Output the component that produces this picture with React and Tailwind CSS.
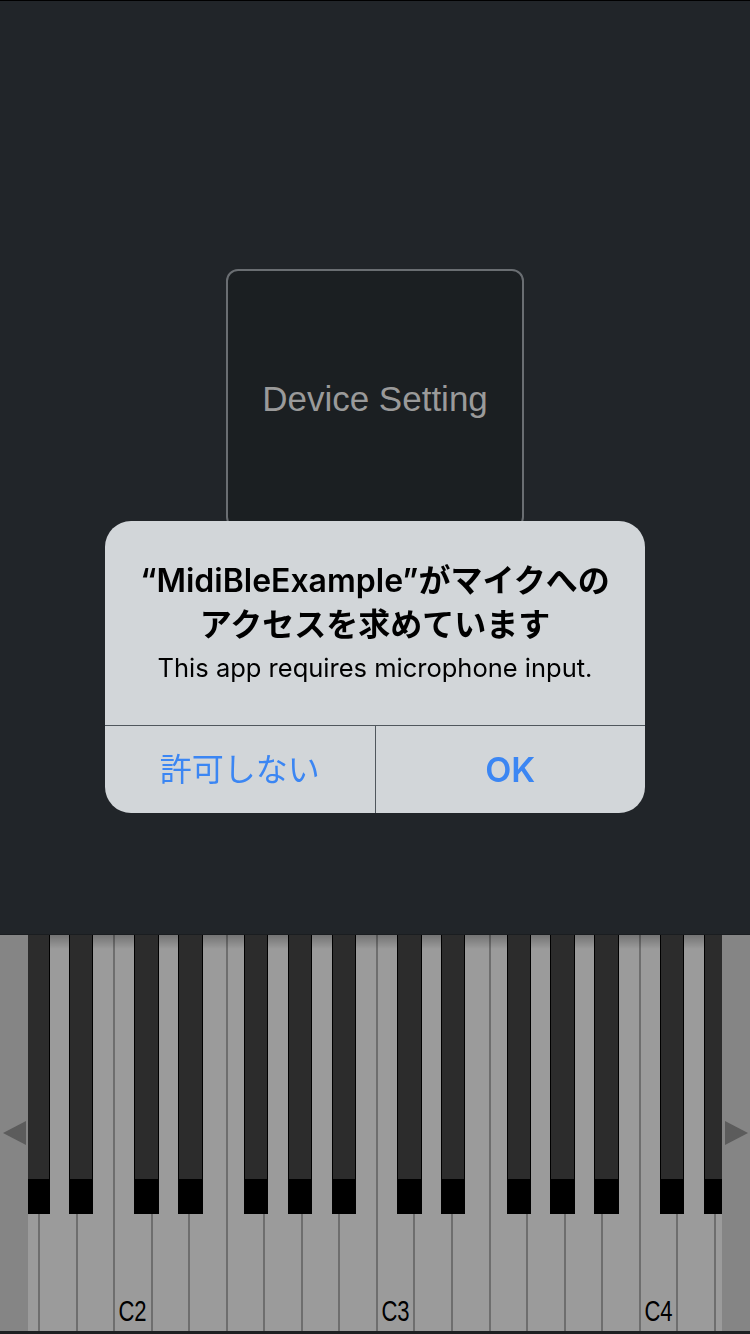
import React from 'react';

const SEMI = 21.9;
// C of each octave, measured from the keyboard's left edge (x = 28)
const OCTAVES = [-176.7, 86, 348.7, 611.4];
const BLACK_STEPS = [1, 3, 6, 8, 10];

const blackKeys = OCTAVES.flatMap((start) =>
    BLACK_STEPS.map((s) => start + s * SEMI - 1.5)
).filter((x) => x > -24 && x < 694);

const labels = [
    { name: 'C2', left: 86 },
    { name: 'C3', left: 348.7 },
    { name: 'C4', left: 611.4 },
];

const Keyboard = () => (
    <div className="flex h-[400px] bg-[#858585] border-t border-[#1a1d20] border-b-[3px] border-b-[#1d1f21]">
        {/* left scroll arrow */}
        <div className="w-[28px] shrink-0 flex items-center justify-center">
            <div className="w-0 h-0 border-y-[12px] border-y-transparent border-r-[23px] border-r-[#5c5c5c]" />
        </div>

        <div className="relative w-[694px] shrink-0 overflow-hidden bg-[#9b9b9b]">
            {/* white keys */}
            <div className="flex h-full ml-[-27.2px]">
                {Array.from({ length: 21 }).map((_, i) => (
                    <div key={i} className="w-[37.53px] shrink-0 h-full border-l-2 border-[#6e6e6e] bg-[#9b9b9b]" />
                ))}
            </div>

            {/* top shade */}
            <div className="absolute top-0 left-0 right-0 h-[14px] bg-gradient-to-b from-black/25 to-transparent" />

            {/* black keys */}
            {blackKeys.map((x, i) => (
                <div
                    key={i}
                    className="absolute top-0 w-[24.5px] h-[279px] flex flex-col border-x border-black"
                    style={{ left: x }}
                >
                    <div className="flex-1 bg-[#2c2c2c]" />
                    <div className="h-[35px] bg-black" />
                </div>
            ))}

            {/* note labels */}
            {labels.map((l) => (
                <div
                    key={l.name}
                    className="absolute top-[362px] w-[37.53px] flex justify-center"
                    style={{ left: l.left }}
                >
                    <span className="text-[29px] leading-[29px] text-black scale-x-[0.76] inline-block" style={{ fontFamily: '"Liberation Sans", Arial, sans-serif' }}>
                        {l.name}
                    </span>
                </div>
            ))}
        </div>

        {/* right scroll arrow */}
        <div className="w-[28px] shrink-0 flex items-center justify-center">
            <div className="w-0 h-0 border-y-[12px] border-y-transparent border-l-[23px] border-l-[#5c5c5c]" />
        </div>
    </div>
);

const PermissionAlert = () => (
    <div className="fixed inset-0 flex items-center justify-center">
        <div className="w-[540px] h-[292px] rounded-[26px] bg-[#d2d6d9] overflow-hidden flex flex-col">
            <div className="h-[204px] pt-[38px] flex flex-col items-center text-black">
                <div
                    className="text-[32px] leading-[44px] font-semibold text-center"
                    style={{ fontFamily: 'Inter, "Noto Sans CJK JP", sans-serif' }}
                >
                    <div>“MidiBleExample”がマイクへの</div>
                    <div>アクセスを求めています</div>
                </div>
                <div
                    className="mt-[5px] text-[25.5px] leading-[32px]"
                    style={{ fontFamily: 'Inter, "Noto Sans CJK JP", sans-serif' }}
                >
                    This app requires microphone input.
                </div>
            </div>
            <div className="flex flex-1 border-t border-[#50575d]">
                <button
                    className="flex-1 flex items-center justify-center text-[32px] text-[#3b86f3] border-r border-[#50575d]"
                    style={{ fontFamily: 'Inter, "Noto Sans CJK JP", sans-serif' }}
                >
                    許可しない
                </button>
                <button
                    className="flex-1 flex items-center justify-center text-[34px] font-semibold text-[#3b86f3]"
                    style={{ fontFamily: 'Inter, "Noto Sans CJK JP", sans-serif' }}
                >
                    OK
                </button>
            </div>
        </div>
    </div>
);

const App = () => {
    return (
        <div className="w-[750px] h-[1334px] flex flex-col bg-[#212529] border-t border-black">
            <div className="flex-1 flex justify-center pt-[268px]">
                <button
                    className="w-[298px] h-[260px] rounded-[12px] border-2 border-[#6a6e72] bg-[#1b1f22] text-[#9a9a9a] text-[35px] flex items-center justify-center"
                    style={{ fontFamily: '"Liberation Sans", Arial, sans-serif' }}
                >
                    Device Setting
                </button>
            </div>

            <Keyboard />

            <PermissionAlert />
        </div>
    );
};

export default App;
